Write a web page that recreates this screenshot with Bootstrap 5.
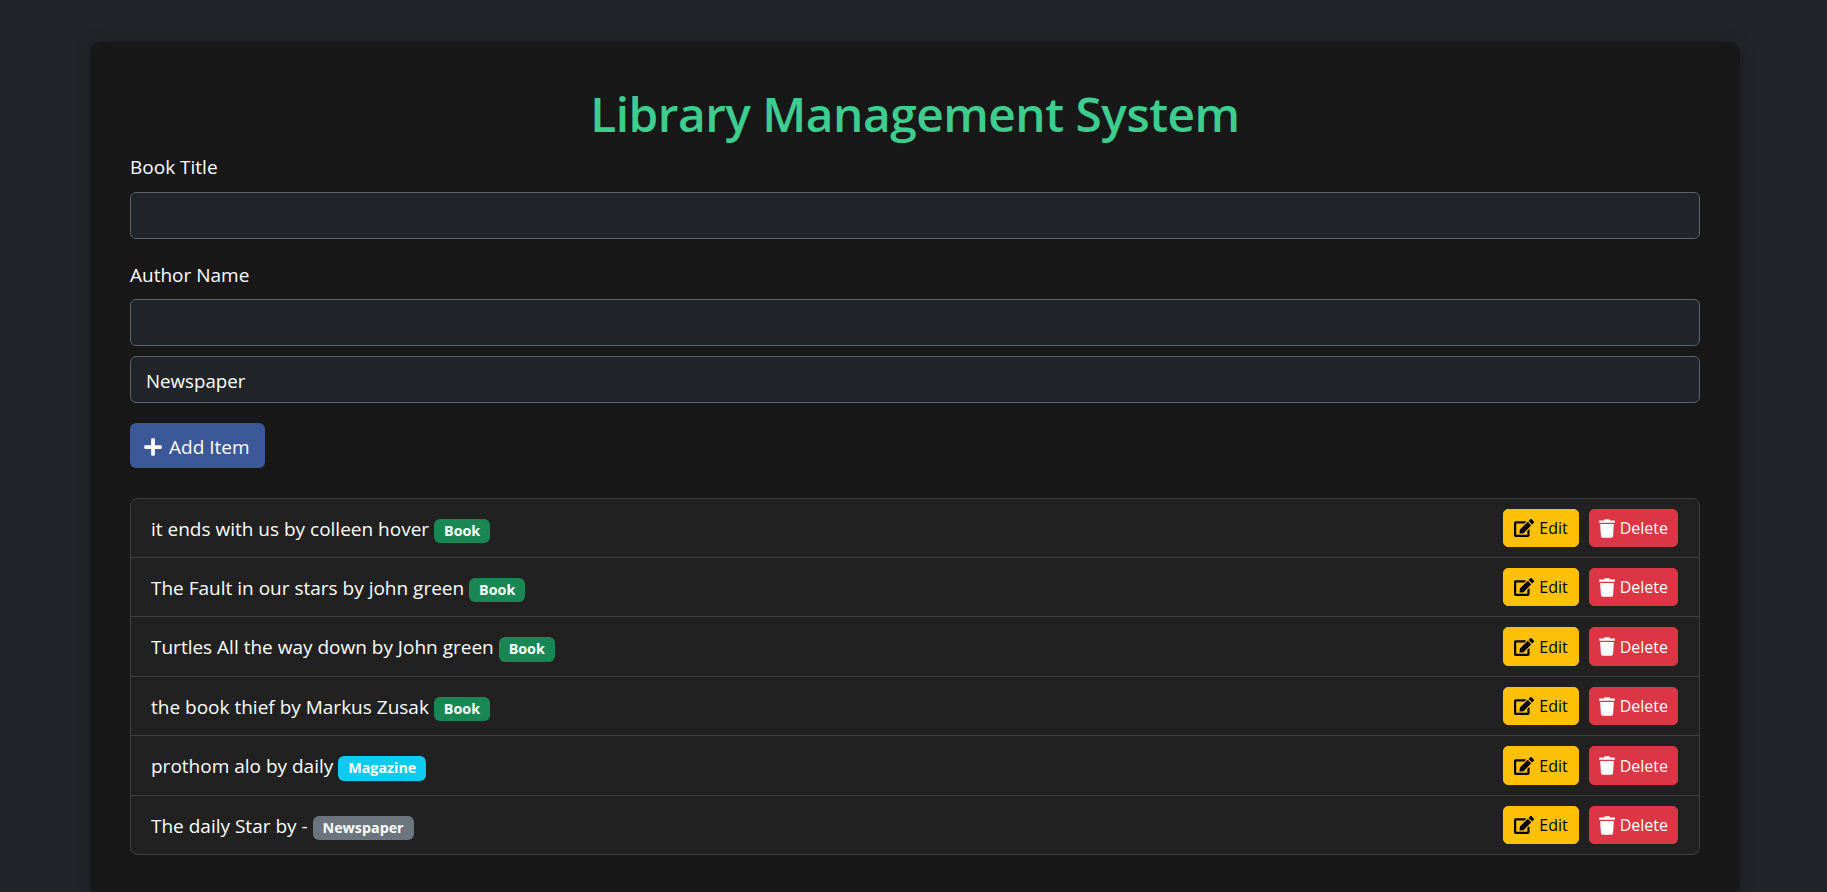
<!DOCTYPE html>
<html lang="en">
<head>
    <meta charset="UTF-8">
    <meta name="viewport" content="width=device-width, initial-scale=1.0">
    <title>Library Management System</title>
    <link href="https://cdn.jsdelivr.net/npm/bootstrap@5.3.3/dist/css/bootstrap.min.css" rel="stylesheet">
    <style>
        html, body { overflow: hidden; }
        body { background-color: #212529; color: #fff; font-family: "Open Sans", "Noto Sans", sans-serif; font-size: 19px; }
        .lib-shell { width: 1650px; margin: 42px 0 0 90px; padding: 43px 40px 40px; background-color: #181818; border-radius: 10px; box-shadow: 0 0 16px rgba(0, 0, 0, .2); }
        .lib-title { color: #3dcd8f; font-size: 47.8px; font-weight: 600; line-height: 1.2; letter-spacing: -.5px; margin-bottom: 11px; }
        .lib-field { margin-bottom: 22px; }
        .lib-field-tight { margin-bottom: 10px; }
        .lib-field-last { margin-bottom: 20px; }
        .lib-label { margin-bottom: 10px; padding-top: 1px; margin-top: -1px; }
        .lib-input, .lib-input:focus { background-color: #212529; border-color: #5c636a; color: #fff; font-size: 18.7px; height: 47px; padding: 1px 15px 0; border-radius: 6px; box-shadow: none; }
        .lib-add { background-color: #3b5998; border: 0; color: #fff; font-size: 19px; height: 45px; padding: 2px 15px 0 14px; border-radius: 6px; gap: 7px; }
        .lib-add:hover { background-color: #3b5998; color: #fff; }
        .lib-add svg { width: 18px; height: 20px; fill: #fff; }
        .lib-list { margin-top: 30px; --bs-list-group-bg: #212121; --bs-list-group-color: #fff; --bs-list-group-border-color: #3d3d3d; --bs-list-group-border-radius: 8px; }
        .lib-row { height: 59.5px; padding: 0 21px 0 20px; }
        .lib-text { padding-top: 2px; }
        .lib-tag { font-size: 14.3px; padding: 5px 10px; border-radius: 6px; vertical-align: 0; }
        .lib-actions { gap: 10px; }
        .lib-act { font-size: 16px; height: 38.4px; padding: 0 10px; border-radius: 5px; gap: 5px; }
        .lib-act svg { height: 18px; fill: currentColor; }
        .lib-act .ico-e { width: 20px; }
        .lib-act .ico-t { width: 16px; height: 19px; }
        .lib-act-del { padding: 0 9px; }
    </style>
</head>
<body>
    <svg class="d-none">
        <symbol id="ico-plus" viewBox="0 0 448 512"><path d="M416 208H272V64c0-17.67-14.33-32-32-32h-32c-17.67 0-32 14.33-32 32v144H32c-17.67 0-32 14.33-32 32v32c0 17.67 14.33 32 32 32h144v144c0 17.67 14.33 32 32 32h32c17.67 0 32-14.33 32-32V304h144c17.67 0 32-14.33 32-32v-32c0-17.67-14.33-32-32-32z"/></symbol>
        <symbol id="ico-edit" viewBox="0 0 576 512"><path d="M402.6 83.2l90.2 90.2c3.8 3.8 3.8 10 0 13.8L274.4 405.6l-92.8 10.3c-12.4 1.4-22.9-9.1-21.5-21.5l10.3-92.8L388.8 83.2c3.8-3.8 10-3.8 13.8 0zm162-22.9l-48.8-48.8c-15.2-15.2-39.9-15.2-55.2 0l-35.4 35.4c-3.8 3.8-3.8 10 0 13.8l90.2 90.2c3.8 3.8 10 3.8 13.8 0l35.4-35.4c15.2-15.3 15.2-40 0-55.2zM384 346.2V448H64V128h229.8c3.2 0 6.2-1.3 8.5-3.5l40-40c7.6-7.6 2.2-20.5-8.5-20.5H48C21.5 64 0 85.5 0 112v352c0 26.5 21.5 48 48 48h352c26.5 0 48-21.5 48-48V306.2c0-10.7-12.9-16-20.5-8.5l-40 40c-2.2 2.3-3.5 5.3-3.5 8.5z"/></symbol>
        <symbol id="ico-trash" viewBox="0 0 448 512"><path d="M432 32H312l-9.4-18.7A24 24 0 0 0 281.1 0H166.8a23.72 23.72 0 0 0-21.4 13.3L136 32H16A16 16 0 0 0 0 48v32a16 16 0 0 0 16 16h416a16 16 0 0 0 16-16V48a16 16 0 0 0-16-16zM53.2 467a48 48 0 0 0 47.9 45h245.8a48 48 0 0 0 47.9-45L416 128H32z"/></symbol>
    </svg>

    <div class="lib-shell">
        <h1 class="lib-title text-center">Library Management System</h1>
        <form>
            <div class="lib-field">
                <label class="form-label lib-label d-block" for="title">Book Title</label>
                <input id="title" class="form-control lib-input" type="text">
            </div>
            <div class="lib-field-tight">
                <label class="form-label lib-label d-block" for="author">Author Name</label>
                <input id="author" class="form-control lib-input" type="text">
            </div>
            <div class="lib-field-last">
                <input class="form-control lib-input" type="text" value="Newspaper" aria-label="Type">
            </div>
            <button type="button" class="btn lib-add d-inline-flex align-items-center">
                <svg><use href="#ico-plus"/></svg> Add Item
            </button>
        </form>
        <ul id="items" class="list-group lib-list"></ul>
    </div>

    <script>
        // Eintraege der Liste
        const items = [
            ['it ends with us by colleen hover', 'Book', 'text-bg-success'],
            ['The Fault in our stars by john green', 'Book', 'text-bg-success'],
            ['Turtles All the way down by John green', 'Book', 'text-bg-success'],
            ['the book thief by Markus Zusak', 'Book', 'text-bg-success'],
            ['prothom alo by daily', 'Magazine', 'bg-info text-white'],
            ['The daily Star by -', 'Newspaper', 'text-bg-secondary']
        ];
        const list = document.getElementById('items');
        items.forEach(item => {
            const li = document.createElement('li');
            li.className = 'list-group-item lib-row d-flex justify-content-between align-items-center';
            li.innerHTML = `
                <span class="lib-text">${item[0]} <span class="badge lib-tag ${item[2]}">${item[1]}</span></span>
                <span class="d-flex lib-actions">
                    <button type="button" class="btn btn-warning lib-act d-inline-flex align-items-center"><svg class="ico-e"><use href="#ico-edit"/></svg>Edit</button>
                    <button type="button" class="btn btn-danger lib-act lib-act-del d-inline-flex align-items-center"><svg class="ico-t"><use href="#ico-trash"/></svg>Delete</button>
                </span>
            `;
            list.appendChild(li);
        });
    </script>
    <script src="https://cdn.jsdelivr.net/npm/bootstrap@5.3.3/dist/js/bootstrap.bundle.min.js"></script>
</body>
</html>
